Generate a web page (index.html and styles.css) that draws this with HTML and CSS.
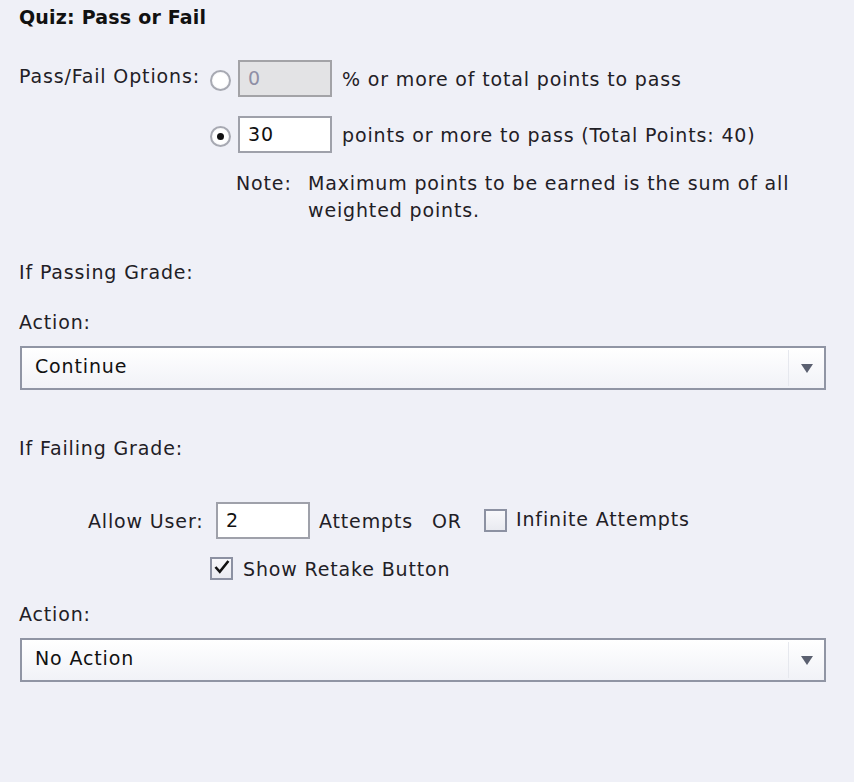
FILE: index.html
```html
<!DOCTYPE html>
<html>
<head>
<meta charset="utf-8">
<link rel="stylesheet" href="styles.css">
</head>
<body>
<div class="page">
  <div class="title">Quiz: Pass or Fail</div>

  <div class="opt-row first">
    <span class="opt-label">Pass/Fail Options:</span>
    <span class="radio"></span>
    <span class="field disabled">0</span>
    <span class="opt-text">% or more of total points to pass</span>
  </div>
  <div class="opt-row second">
    <span class="opt-label"></span>
    <span class="radio checked"></span>
    <span class="field">30</span>
    <span class="opt-text">points or more to pass (Total Points: 40)</span>
  </div>
  <div class="note">
    <span class="note-key">Note:</span>
    <span class="note-text">Maximum points to be earned is the sum of all weighted points.</span>
  </div>

  <div class="line passing">If Passing Grade:</div>
  <div class="line action">Action:</div>
  <div class="select">
    <span class="select-value">Continue</span>
    <span class="select-sep"></span>
    <span class="select-arrow"></span>
  </div>

  <div class="line failing">If Failing Grade:</div>
  <div class="allow-row">
    <span class="allow-label">Allow User:</span>
    <span class="field small">2</span>
    <span class="allow-text">Attempts</span>
    <span class="allow-or">OR</span>
    <span class="checkbox"></span>
    <span class="allow-inf">Infinite Attempts</span>
  </div>
  <div class="retake-row">
    <span class="checkbox checked">
      <svg viewBox="0 0 22 22" width="22" height="22"><path d="M4 11 L9 16.5 L19 4" fill="none" stroke="#111" stroke-width="3"/></svg>
    </span>
    <span class="retake-text">Show Retake Button</span>
  </div>
  <div class="line action2">Action:</div>
  <div class="select">
    <span class="select-value">No Action</span>
    <span class="select-sep"></span>
    <span class="select-arrow"></span>
  </div>
</div>
</body>
</html>
```

FILE: styles.css
```css
html, body {
  margin: 0;
  padding: 0;
  background: #eff0f7;
}
body {
  font-family: "DejaVu Sans", sans-serif;
  font-size: 19px;
  letter-spacing: 0.85px;
  color: #1f2026;
  width: 854px;
  height: 782px;
  overflow: hidden;
}
.page {
  padding: 4px 0 0 19px;
}
.title {
  font-weight: bold;
  font-size: 19px;
  letter-spacing: 0.2px;
  line-height: 27px;
  height: 27px;
  color: #111;
}
.opt-row {
  display: flex;
  align-items: center;
  height: 37px;
}
.opt-row.first { margin-top: 29px; }
.opt-row.second { margin-top: 19px; }
.opt-label {
  width: 191px;
  flex: none;
  position: relative;
  top: -3px;
  white-space: nowrap;
}
.radio {
  width: 17px;
  height: 17px;
  border-radius: 50%;
  border: 2px solid #a7a9b2;
  background: radial-gradient(circle, #fff 55%, #e9eaef 100%);
  flex: none;
  margin-top: 4px;
  display: flex;
  align-items: center;
  justify-content: center;
}
.radio.checked::after {
  content: "";
  width: 7px;
  height: 7px;
  border-radius: 50%;
  background: #111;
}
.field {
  box-sizing: border-box;
  width: 94px;
  height: 37px;
  border: 2px solid #9fa1aa;
  background: #fff;
  margin-left: 7px;
  padding-left: 8px;
  line-height: 33px;
  color: #111;
  flex: none;
}
.field.disabled {
  background: #e3e3e5;
  color: #8f8fa6;
  border-color: #a3a3a7;
}
.opt-text {
  margin-left: 10px;
  white-space: nowrap;
}
.note {
  display: flex;
  margin: 17px 0 0 217px;
  line-height: 27px;
}
.note-key {
  width: 72px;
  flex: none;
}
.note-text {
  width: 505px;
}
.line {
  line-height: 27px;
  height: 27px;
}
.passing { margin-top: 35px; }
.action { margin-top: 23px; }
.failing { margin-top: 45px; }
.action2 { margin-top: 19px; }
.select {
  box-sizing: border-box;
  width: 806px;
  height: 44px;
  margin: 10px 0 0 1px;
  border: 2px solid #9095a4;
  background: linear-gradient(#ffffff, #f1f2f7);
  display: flex;
  align-items: center;
  padding-left: 13px;
}
.select-value {
  flex: 1;
  color: #111;
  position: relative;
  top: -2px;
}
.select-sep {
  width: 1px;
  height: 36px;
  background: #e6e8ee;
  margin-right: 12px;
}
.select-arrow {
  width: 0;
  height: 0;
  border-left: 6px solid transparent;
  border-right: 6px solid transparent;
  border-top: 9px solid #5b6070;
  margin-right: 11px;
}
.allow-row {
  display: flex;
  align-items: center;
  height: 37px;
  margin-top: 40px;
  padding-left: 69px;
  white-space: nowrap;
}
.allow-label {
  width: 127px;
  flex: none;
}
.field.small {
  margin-left: 1px;
}
.allow-text {
  margin-left: 9px;
  width: 113px;
}
.allow-or {
  width: 52px;
}
.checkbox {
  box-sizing: border-box;
  width: 23px;
  height: 23px;
  border: 2px solid #8c91a2;
  background: linear-gradient(#f8f8fb, #e9eaf0);
  flex: none;
  display: flex;
  align-items: center;
  justify-content: center;
}
.allow-inf {
  margin-left: 9px;
  position: relative;
  top: -2px;
}
.retake-row {
  display: flex;
  align-items: center;
  height: 27px;
  margin-top: 16px;
  padding-left: 191px;
}
.checkbox.checked svg {
  display: block;
  margin-top: -3px;
}
.retake-text {
  margin-left: 10px;
}
```
